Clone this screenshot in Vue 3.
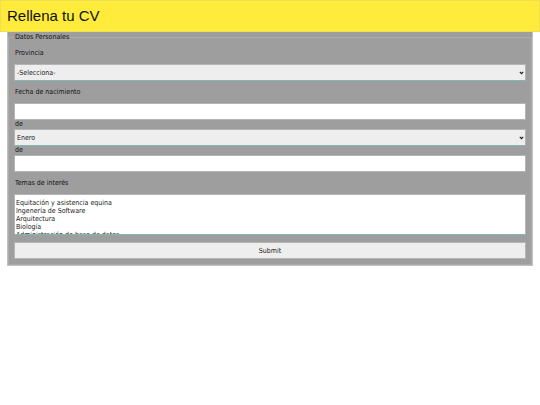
<script setup>
import { ref } from "vue";

const provincias = ["Álava", "Barcelona", "Madrid", "Sevilla", "Valencia"];
const meses = [
  "Enero",
  "Febrero",
  "Marzo",
  "Abril",
  "Mayo",
  "Junio",
  "Julio",
  "Agosto",
  "Septiembre",
  "Octubre",
  "Noviembre",
  "Diciembre",
];
const temas = [
  "Equitación y asistencia equina",
  "Ingenería de Software",
  "Arquitectura",
  "Biología",
  "Administración de base de datos",
];

const provincia = ref("");
const dia = ref("");
const mes = ref("Enero");
const anio = ref("");
const intereses = ref([]);

function handleSubmit() {
  // TODO: enviar el formulario
}
</script>

<template>
  <header>
    <h1>Rellena tu CV</h1>
  </header>

  <form @submit.prevent="handleSubmit">
    <fieldset>
      <legend>Datos Personales</legend>

      <label class="title" for="provincia">Provincia</label>
      <select id="provincia" v-model="provincia" class="desplegable">
        <option value="">-Selecciona-</option>
        <option v-for="p in provincias" :key="p">{{ p }}</option>
      </select>

      <label class="title" for="dia">Fecha de nacimiento</label>
      <input id="dia" v-model="dia" type="text" />
      <label class="de" for="mes">de</label>
      <select id="mes" v-model="mes" class="desplegable">
        <option v-for="m in meses" :key="m">{{ m }}</option>
      </select>
      <label class="de" for="anio">de</label>
      <input id="anio" v-model="anio" type="text" />

      <label class="title" for="temas">Temas de interés</label>
      <select id="temas" v-model="intereses" class="temas" multiple>
        <option v-for="t in temas" :key="t">{{ t }}</option>
      </select>

      <button type="submit">Submit</button>
    </fieldset>
  </form>
</template>

<style>
body {
  background-color: white;
  font-family: "DejaVu Sans Condensed", "DejaVu Sans", Verdana, sans-serif;
  font-size: 7px;
  color: #111;
}
</style>

<style scoped>
* {
  box-sizing: border-box;
}

header {
  padding: 6px;
  border: 1px solid #eedf50;
  background-color: #ffeb3b;
}

h1 {
  margin: 0;
  font-family: "Liberation Sans", Arial, sans-serif;
  font-size: 15px;
  font-weight: normal;
  line-height: 18px;
}

form {
  margin: 0 7px;
  border: solid #c0c0c0;
  border-width: 0 1px 1px;
  background-color: #9e9e9e;
}

fieldset {
  display: flex;
  flex-direction: column;
  min-width: 0;
  margin: 0;
  padding: 0 5px 5px;
  border: 1px solid #ababab;
}

legend {
  padding: 0 1px;
  line-height: 10px;
}

.title {
  padding: 7px 1px;
  line-height: 8px;
}

.de {
  padding: 0 1px;
  line-height: 9px;
}

input,
select,
button {
  width: 100%;
  height: 17px;
  margin: 0;
  padding: 0 2px;
  border: 1px solid #b4b4b4;
  border-radius: 0;
  background-color: #eee;
  color: #222;
  font: inherit;
}

input {
  background-color: white;
}

select {
  border-bottom-color: #80b8b0;
}

.desplegable {
  appearance: none;
  background-image: url("data:image/svg+xml,%3Csvg xmlns='http://www.w3.org/2000/svg' width='5' height='4' viewBox='0 0 5 4'%3E%3Cpath d='M.8.9 2.5 2.6 4.2.9' fill='none' stroke='%23111' stroke-width='1.1'/%3E%3C/svg%3E");
  background-repeat: no-repeat;
  background-position: right 1px center;
}

.temas {
  height: 41px;
  margin-bottom: 7px;
  padding: 4px 0 0;
  background-color: white;
  scrollbar-width: none;
}

.temas option {
  height: 8px;
  min-height: 0;
  padding: 0 1px;
  line-height: 8px;
}
</style>
